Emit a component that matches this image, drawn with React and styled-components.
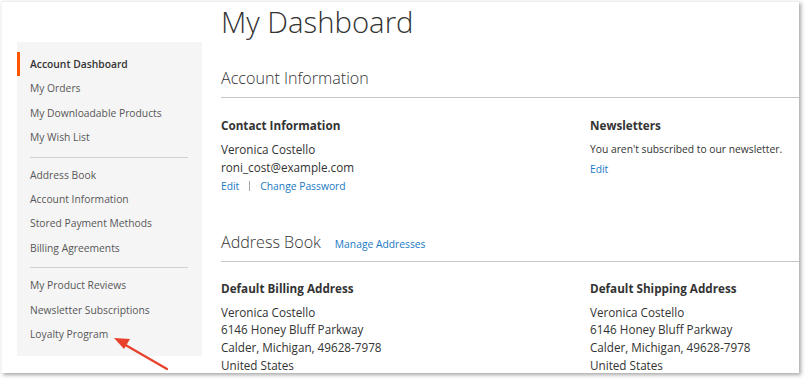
import React from 'react';
import styled, { createGlobalStyle } from 'styled-components';

const Global = createGlobalStyle`
  html, body { margin: 0; padding: 0; background: #fff; }
  body { font-family: "Open Sans", "Liberation Sans", sans-serif; color: #333; -webkit-font-smoothing: antialiased; }
  * { box-sizing: border-box; }
`;

const Screen = styled.div`
  width: 806px;
  height: 381px;
  padding: 1px 0 0 1px;
  background: #fff;
  overflow: hidden;
`;

const Frame = styled.div`
  position: relative;
  width: 798px;
  height: 372px;
  background: #fff;
  border-top: 1px solid #eeeeee;
  border-left: 1px solid #f4f4f4;
  box-shadow: 2px 2px 4px rgba(0, 0, 0, 0.35);
  overflow: hidden;
  display: flex;
  align-items: flex-start;
`;

const Sidebar = styled.nav`
  margin: 40px 0 0 15px;
  width: 185px;
  flex: none;
  background: #f5f5f5;
  padding: 10px 0 10px;
  display: flex;
  flex-direction: column;
`;

const NavItem = styled.div`
  border-left: 3px solid ${p => (p.$active ? '#ff5501' : 'transparent')};
  padding: 4px 10px 4px 10px;
  font-size: 10.3px;
  line-height: 16.4px;
  color: ${p => (p.$active ? '#333' : '#575757')};
  font-weight: ${p => (p.$active ? 600 : 400)};
  white-space: nowrap;
`;

const Delim = styled.div`
  border-top: 1px solid #d1d1d1;
  margin: 7px 14px 5px 13px;
`;

const Main = styled.main`
  margin-left: 19px;
  flex: 1;
  min-width: 0;
  display: flex;
  flex-direction: column;
`;

const Title = styled.h1`
  margin: 0;
  font-size: 29.3px;
  line-height: 40px;
  font-weight: 300;
  color: #333;
  white-space: nowrap;
`;

const BlockTitle = styled.div`
  display: flex;
  align-items: baseline;
  gap: 14px;
  border-bottom: 1px solid #c6c6c6;
  padding-bottom: 7px;
  margin-top: ${p => p.$mt || 0}px;
`;

const BlockHeading = styled.h2`
  margin: 0;
  font-size: 16.1px;
  line-height: 24px;
  font-weight: 300;
  color: #333;
`;

const Columns = styled.div`
  display: grid;
  grid-template-columns: 369px 1fr;
  padding-top: ${p => p.$pt || 18}px;
`;

const Box = styled.div`
  display: flex;
  flex-direction: column;
`;

const BoxTitle = styled.div`
  font-size: 11.7px;
  line-height: 18px;
  font-weight: 700;
  color: #333;
  margin-bottom: 7px;
  white-space: nowrap;
`;

const Line = styled.div`
  font-size: ${p => (p.$small ? 10.3 : 11.7)}px;
  line-height: 17.8px;
  color: #333;
  white-space: nowrap;
`;

const Actions = styled.div`
  display: flex;
  align-items: center;
  line-height: 16px;
  margin-top: ${p => p.$mt ?? 1}px;
`;

const Link = styled.a`
  color: #1979c3;
  text-decoration: none;
  font-size: 10.3px;
  white-space: nowrap;
`;

const Sep = styled.span`
  display: inline-block;
  width: 1px;
  height: 10px;
  background: #a6a6a6;
  margin: 0 10px;
`;

const Arrow = styled.svg`
  position: absolute;
  left: 100px;
  top: 325px;
  overflow: visible;
`;

const nav1 = ['Account Dashboard', 'My Orders', 'My Downloadable Products', 'My Wish List'];
const nav2 = ['Address Book', 'Account Information', 'Stored Payment Methods', 'Billing Agreements'];
const nav3 = ['My Product Reviews', 'Newsletter Subscriptions', 'Loyalty Program'];

export default function App() {
  return (
    <>
      <Global />
      <Screen>
        <Frame>
          <Sidebar>
            {nav1.map((t, i) => (
              <NavItem key={t} $active={i === 0}>{t}</NavItem>
            ))}
            <Delim />
            {nav2.map(t => <NavItem key={t}>{t}</NavItem>)}
            <Delim />
            {nav3.map(t => <NavItem key={t}>{t}</NavItem>)}
          </Sidebar>
          <Main>
            <Title>My Dashboard</Title>
            <BlockTitle $mt={24}>
              <BlockHeading>Account Information</BlockHeading>
            </BlockTitle>
            <Columns $pt={18}>
              <Box>
                <BoxTitle>Contact Information</BoxTitle>
                <Line>Veronica Costello</Line>
                <Line>roni_cost@example.com</Line>
                <Actions>
                  <Link href="#">Edit</Link>
                  <Sep />
                  <Link href="#">Change Password</Link>
                </Actions>
              </Box>
              <Box>
                <BoxTitle>Newsletters</BoxTitle>
                <Line $small>You aren't subscribed to our newsletter.</Line>
                <Actions $mt={2}>
                  <Link href="#">Edit</Link>
                </Actions>
              </Box>
            </Columns>
            <BlockTitle $mt={36}>
              <BlockHeading>Address Book</BlockHeading>
              <Link href="#">Manage Addresses</Link>
            </BlockTitle>
            <Columns $pt={17}>
              <Box>
                <BoxTitle>Default Billing Address</BoxTitle>
                <Line>Veronica Costello</Line>
                <Line>6146 Honey Bluff Parkway</Line>
                <Line>Calder, Michigan, 49628-7978</Line>
                <Line>United States</Line>
              </Box>
              <Box>
                <BoxTitle>Default Shipping Address</BoxTitle>
                <Line>Veronica Costello</Line>
                <Line>6146 Honey Bluff Parkway</Line>
                <Line>Calder, Michigan, 49628-7978</Line>
                <Line>United States</Line>
              </Box>
            </Columns>
          </Main>
          <Arrow width="70" height="50" viewBox="0 0 70 50">
            <line x1="65" y1="42" x2="20" y2="16" stroke="#e8402a" strokeWidth="2.2" strokeLinecap="round" />
            <polygon points="12,11 28,12 22,22" fill="#e8402a" />
          </Arrow>
        </Frame>
      </Screen>
    </>
  );
}
